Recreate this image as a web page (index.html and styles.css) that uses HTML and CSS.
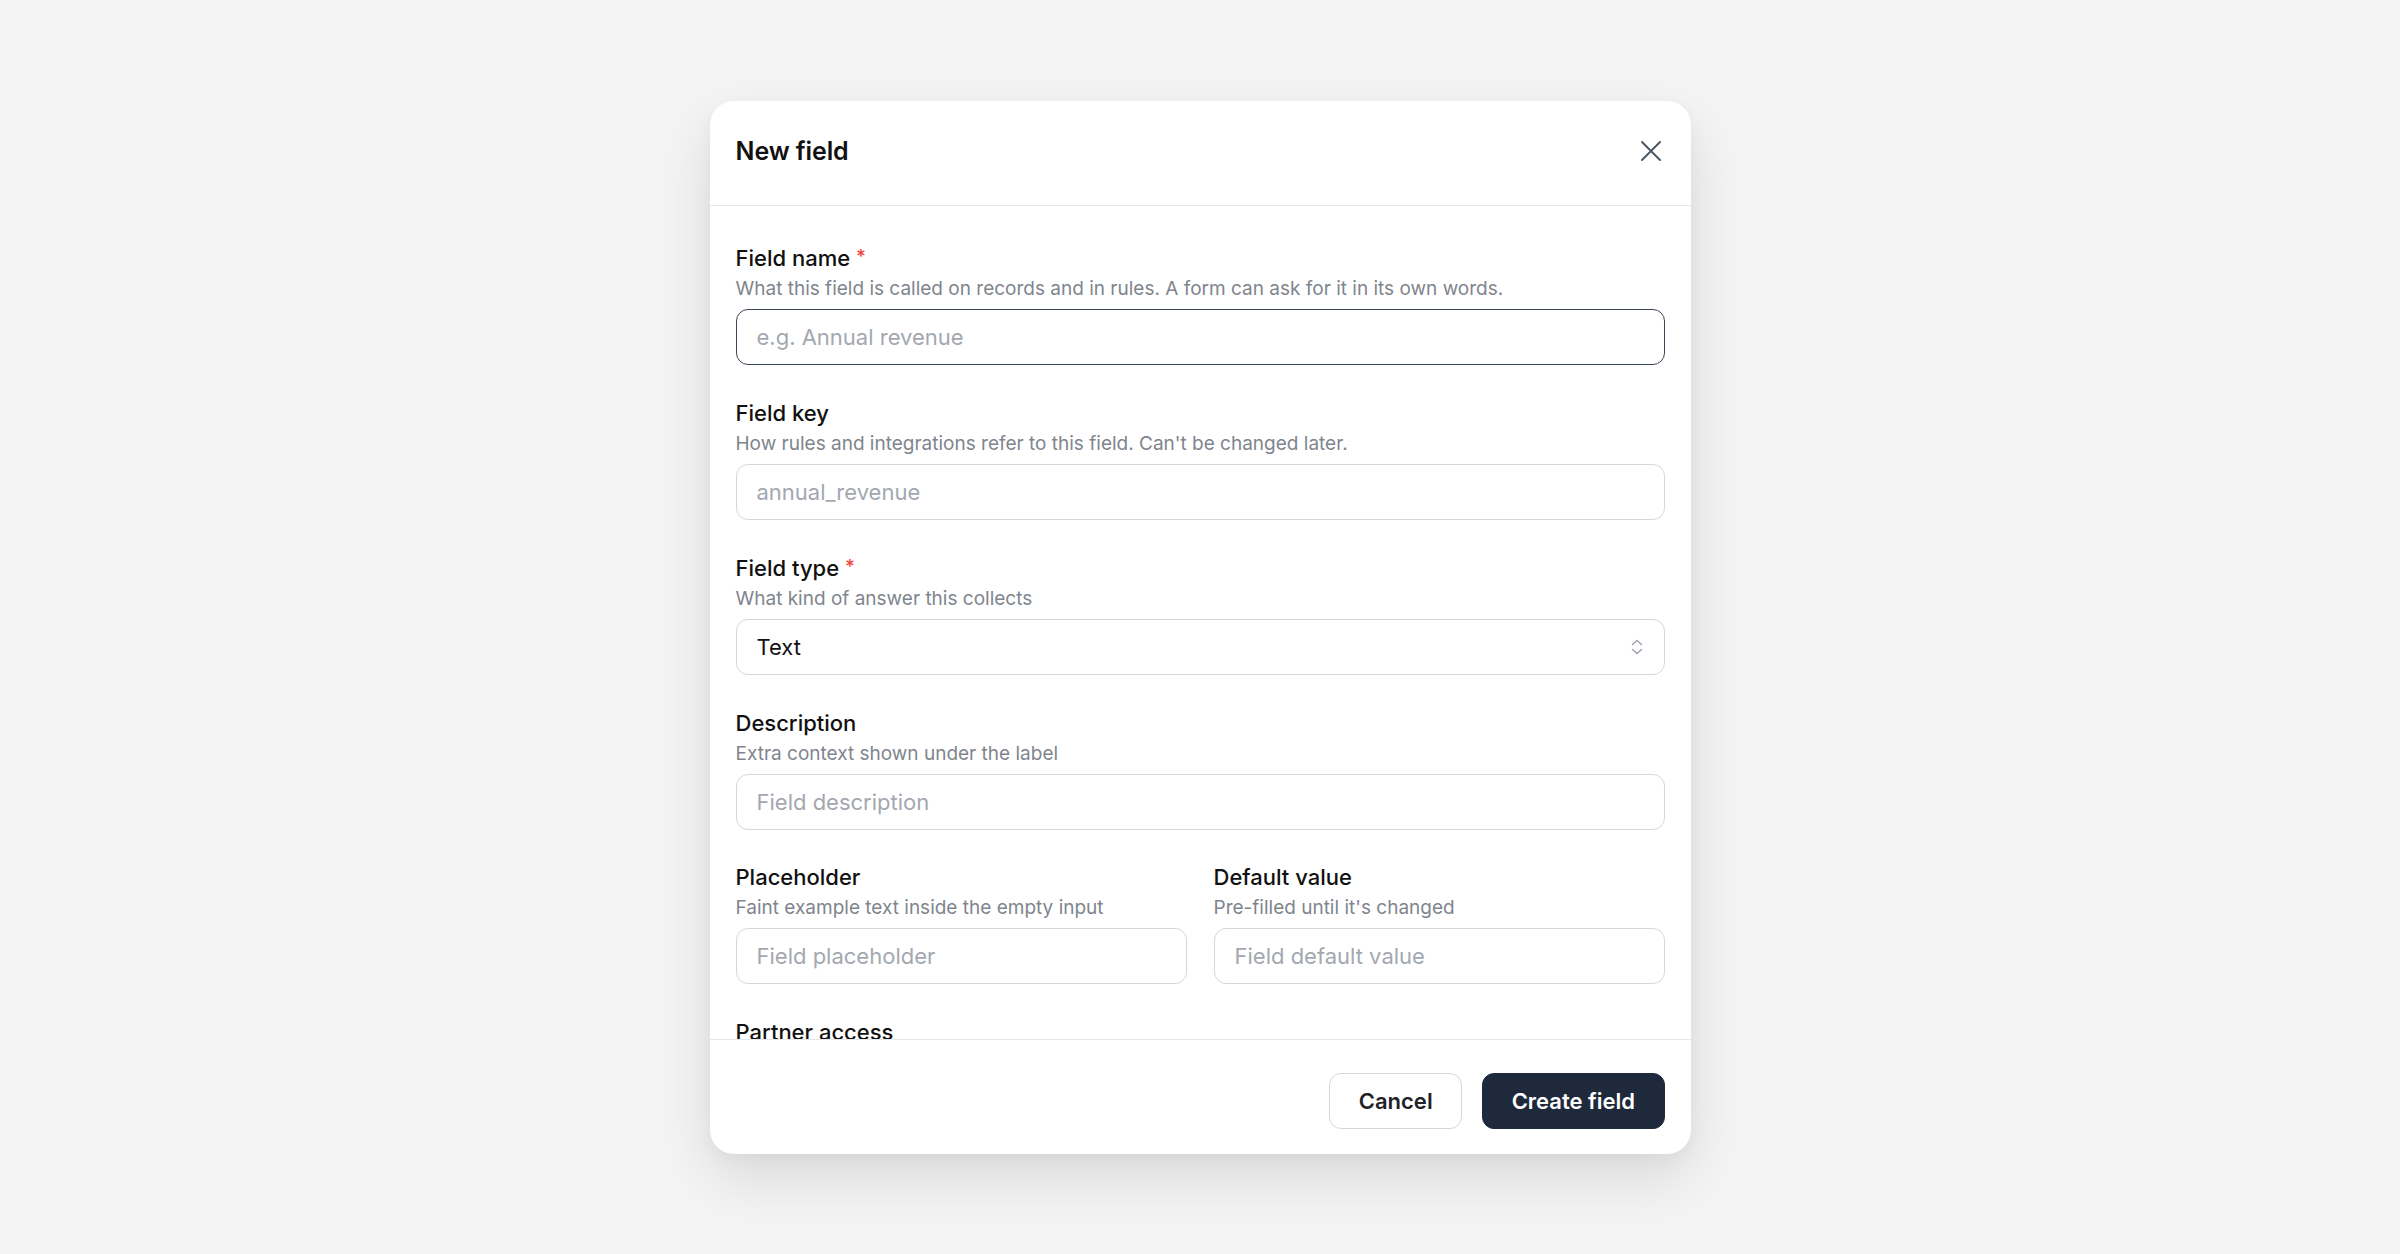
FILE: index.html
```html
<!DOCTYPE html>
<html lang="en">
<head>
<meta charset="utf-8">
<title>New field</title>
<link rel="stylesheet" href="styles.css">
</head>
<body>
<div class="modal" role="dialog" aria-labelledby="modal-title">
  <div class="modal-header">
    <h2 class="modal-title" id="modal-title">New field</h2>
    <button class="close-btn" type="button" aria-label="Close">
      <svg width="20" height="20" viewBox="0 0 20 20" fill="none" stroke="currentColor" stroke-width="1.9" stroke-linecap="round"><path d="M1 1L19 19M19 1L1 19"/></svg>
    </button>
  </div>
  <div class="modal-body">
    <div class="field">
      <label class="field-label">Field name <span class="req">*</span></label>
      <div class="field-help">What this field is called on records and in rules. A form can ask for it in its own words.</div>
      <input class="input input-focus" type="text" placeholder="e.g. Annual revenue">
    </div>
    <div class="field">
      <label class="field-label">Field key</label>
      <div class="field-help">How rules and integrations refer to this field. Can't be changed later.</div>
      <input class="input" type="text" placeholder="annual_revenue">
    </div>
    <div class="field">
      <label class="field-label">Field type <span class="req">*</span></label>
      <div class="field-help">What kind of answer this collects</div>
      <div class="select">
        <span class="select-value">Text</span>
        <svg class="select-icon" width="12" height="16" viewBox="0 0 12 16" fill="none" stroke="currentColor" stroke-width="1.5" stroke-linecap="round" stroke-linejoin="round"><path d="M1.5 5.5L6 1.5L10.5 5.5M1.5 10.5L6 14.5L10.5 10.5"/></svg>
      </div>
    </div>
    <div class="field">
      <label class="field-label">Description</label>
      <div class="field-help">Extra context shown under the label</div>
      <input class="input" type="text" placeholder="Field description">
    </div>
    <div class="field-row">
      <div class="field">
        <label class="field-label">Placeholder</label>
        <div class="field-help">Faint example text inside the empty input</div>
        <input class="input" type="text" placeholder="Field placeholder">
      </div>
      <div class="field">
        <label class="field-label">Default value</label>
        <div class="field-help">Pre-filled until it's changed</div>
        <input class="input" type="text" placeholder="Field default value">
      </div>
    </div>
    <div class="field">
      <label class="field-label">Partner access</label>
    </div>
  </div>
  <div class="modal-footer">
    <button class="btn btn-secondary" type="button">Cancel</button>
    <button class="btn btn-primary" type="button">Create field</button>
  </div>
</div>
</body>
</html>
```

FILE: styles.css
```css
* {
  box-sizing: border-box;
}

html, body {
  margin: 0;
  padding: 0;
  height: 100%;
}

body {
  background: #f4f4f4;
  font-family: Inter, "Noto Sans", "Liberation Sans", sans-serif;
  color: #111827;
  display: flex;
  align-items: center;
  justify-content: center;
}

.modal {
  width: 981px;
  height: 1053px;
  background: #ffffff;
  border-radius: 24px;
  display: flex;
  flex-direction: column;
  overflow: hidden;
  box-shadow: 0 24px 60px rgba(0, 0, 0, 0.11), 0 6px 16px rgba(0, 0, 0, 0.04);
}

.modal-header {
  flex: none;
  height: 105.5px;
  padding: 0 30px 4px 26px;
  border-bottom: 1.5px solid #e5e7eb;
  display: flex;
  align-items: center;
  justify-content: space-between;
}

.modal-title {
  margin: 0;
  font-size: 25px;
  line-height: 32px;
  font-weight: 600;
  color: #111111;
  letter-spacing: -0.1px;
}

.close-btn {
  border: 0;
  padding: 0;
  background: transparent;
  color: #4b5563;
  width: 20px;
  height: 20px;
  display: flex;
  cursor: pointer;
}

.modal-body {
  flex: 1;
  min-height: 0;
  overflow: hidden;
  padding: 36px 26px 0;
  display: flex;
  flex-direction: column;
  gap: 32.5px;
}

.field {
  display: flex;
  flex-direction: column;
  min-width: 0;
}

.field-label {
  font-size: 22px;
  line-height: 30px;
  font-weight: 500;
  color: #111111;
}

.req {
  color: #ef4444;
  font-size: 19px;
  vertical-align: 3px;
}

.field-help {
  margin-top: 3px;
  font-size: 19px;
  line-height: 26px;
  color: #80858d;
  white-space: nowrap;
}

.input,
.select {
  margin-top: 7px;
  height: 56px;
  width: 100%;
  border: 1.5px solid #d4d7dc;
  border-radius: 12px;
  background: #ffffff;
  padding: 0 20px;
  font-family: inherit;
  font-size: 22px;
  color: #111111;
  outline: none;
}

.input::placeholder {
  color: #a3a8b0;
}

.input-focus {
  border-color: #3a4556;
}

.select {
  display: flex;
  align-items: center;
  justify-content: space-between;
  padding-right: 21px;
}

.select-value {
  color: #111111;
}

.select-icon {
  color: #9ca3af;
}

.field-row {
  display: grid;
  grid-template-columns: 1fr 1fr;
  column-gap: 27px;
}

.modal-footer {
  flex: none;
  border-top: 1.5px solid #e5e7eb;
  padding: 32.5px 26px 24.5px;
  display: flex;
  justify-content: flex-end;
  gap: 20px;
}

.btn {
  height: 56.5px;
  padding: 0 28.5px;
  border-radius: 12px;
  font-family: inherit;
  font-size: 22px;
  font-weight: 600;
  cursor: pointer;
}

.btn-secondary {
  background: #ffffff;
  border: 1.5px solid #d4d7dc;
  color: #1f2328;
}

.btn-primary {
  background: #1e293b;
  border: 1.5px solid #1e293b;
  color: #ffffff;
}
```
